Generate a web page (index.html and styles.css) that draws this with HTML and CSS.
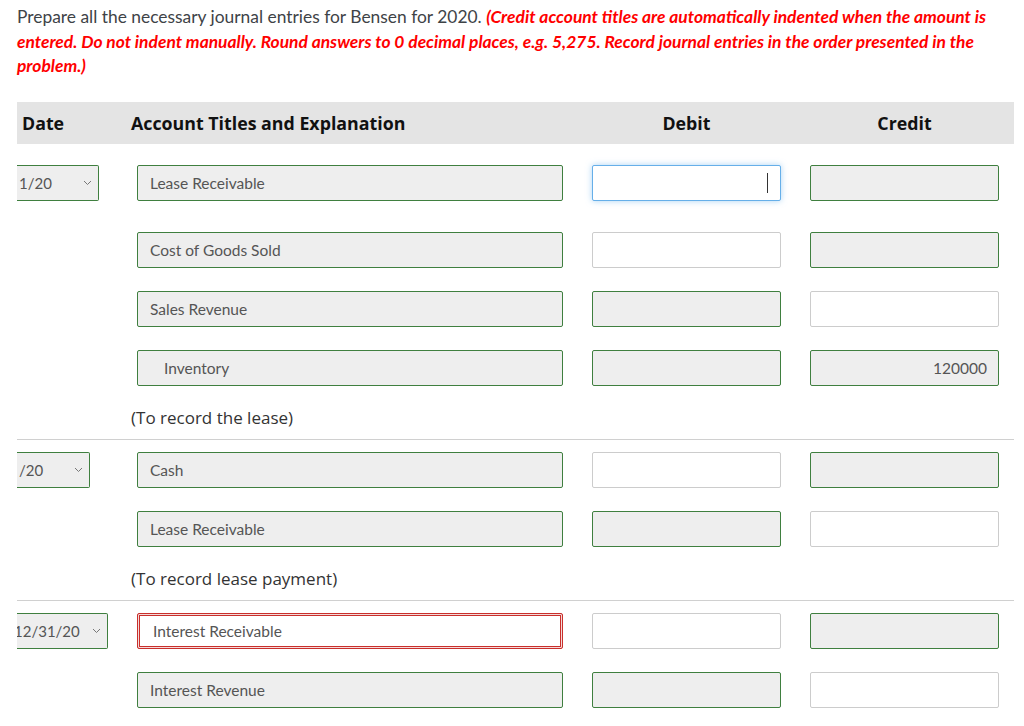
FILE: index.html
```html
<!DOCTYPE html>
<html>
<head>
<meta charset="utf-8">
<link rel="stylesheet" href="styles.css">
</head>
<body>
<div class="page">
  <p class="intro">Prepare all the necessary journal entries for Bensen for 2020. <em class="note">(Credit account titles are automatically indented when the amount is entered. Do not indent manually. Round answers to 0 decimal places, e.g. 5,275. Record journal entries in the order presented in the problem.)</em></p>

  <div class="journal">
    <div class="head">
      <div class="h-date">Date</div>
      <div class="h-acct">Account Titles and Explanation</div>
      <div class="h-num">Debit</div>
      <div class="h-num">Credit</div>
    </div>

    <div class="entry entry-first">
      <div class="row row-first">
        <div class="date-cell"><div class="date-box date-a"><span class="date-text">1/20</span><svg class="chev" width="9" height="6" viewBox="0 0 9 6"><polyline points="1,1 4.5,4.5 8,1" fill="none" stroke="#777" stroke-width="1"/></svg></div></div>
        <div class="field done">Lease Receivable</div>
        <div class="field focus"><span class="caret"></span></div>
        <div class="field done"></div>
      </div>
      <div class="row">
        <div class="date-cell"></div>
        <div class="field done">Cost of Goods Sold</div>
        <div class="field blank"></div>
        <div class="field done"></div>
      </div>
      <div class="row">
        <div class="date-cell"></div>
        <div class="field done">Sales Revenue</div>
        <div class="field done"></div>
        <div class="field blank"></div>
      </div>
      <div class="row">
        <div class="date-cell"></div>
        <div class="field done indent">Inventory</div>
        <div class="field done"></div>
        <div class="field done num">120000</div>
      </div>
      <div class="explain">(To record the lease)</div>
    </div>

    <div class="entry">
      <div class="row">
        <div class="date-cell"><div class="date-box date-b"><span class="date-text">/20</span><svg class="chev" width="9" height="6" viewBox="0 0 9 6"><polyline points="1,1 4.5,4.5 8,1" fill="none" stroke="#777" stroke-width="1"/></svg></div></div>
        <div class="field done">Cash</div>
        <div class="field blank"></div>
        <div class="field done"></div>
      </div>
      <div class="row">
        <div class="date-cell"></div>
        <div class="field done">Lease Receivable</div>
        <div class="field done"></div>
        <div class="field blank"></div>
      </div>
      <div class="explain">(To record lease payment)</div>
    </div>

    <div class="entry last">
      <div class="row">
        <div class="date-cell"><div class="date-box date-c"><span class="date-text cut">12/31/20</span><svg class="chev" width="9" height="6" viewBox="0 0 9 6"><polyline points="1,1 4.5,4.5 8,1" fill="none" stroke="#777" stroke-width="1"/></svg></div></div>
        <div class="field error">Interest Receivable</div>
        <div class="field blank"></div>
        <div class="field done"></div>
      </div>
      <div class="row">
        <div class="date-cell"></div>
        <div class="field done">Interest Revenue</div>
        <div class="field done"></div>
        <div class="field blank"></div>
      </div>
    </div>
  </div>
</div>
</body>
</html>
```

FILE: styles.css
```css
* { box-sizing: border-box; }
html, body { margin: 0; padding: 0; background: #fff; }
body { font-family: Lato, "Open Sans", sans-serif; overflow: hidden; }

.page { padding: 5px 10px 0 17px; }

.intro {
  margin: 0;
  width: 990px;
  font-size: 17.4px;
  line-height: 24.5px;
  color: #3e4347;
}
.note {
  color: #f00;
  font-weight: 700;
  font-style: italic;
}

.journal { margin-top: 23px; width: 997px; }

.head {
  display: grid;
  grid-template-columns: 91px 426px 189px 189px;
  column-gap: 29px;
  align-items: center;
  height: 42px;
  padding-right: 15px;
  background: #e4e4e4;
  font-family: "Open Sans", sans-serif;
  font-weight: 700;
  font-size: 17.8px;
  color: #111;
}
.h-date { padding-left: 5px; }
.h-acct { margin-left: -6px; }
.h-num { text-align: center; }

.entry {
  padding-top: 12px;
  padding-bottom: 9px;
  border-bottom: 1px solid #d0d0d0;
}
.entry-first { padding-top: 21px; }
.entry.last { border-bottom: none; padding-top: 12px; }

.row {
  display: grid;
  grid-template-columns: 91px 426px 189px 189px;
  column-gap: 29px;
  height: 36px;
  margin-bottom: 23px;
}
.row-first { margin-bottom: 31px; }

.date-cell { overflow: hidden; }
.date-box {
  height: 36px;
  display: flex;
  align-items: center;
  justify-content: space-between;
  background: #eeeeee;
  border: 1px solid #3f7f3f;
  border-left: none;
  border-radius: 0 2px 2px 0;
  font-size: 15px;
  color: #555;
  padding-right: 6px;
}
.date-a { width: 82px; }
.date-b { width: 73px; }
.date-c { width: 91px; }
.date-text { padding-left: 2px; }
.date-text.cut { margin-left: -3px; padding-left: 0; }
.chev { flex: none; }

.field {
  height: 36px;
  display: flex;
  align-items: center;
  padding: 0 12px;
  font-size: 15.5px;
  color: #555;
  border-radius: 2px;
}
.field.done {
  background: #eeeeee;
  border: 1px solid #3f7f3f;
}
.field.blank {
  background: #fff;
  border: 1px solid #cccccc;
}
.field.focus {
  background: #fff;
  border: 1px solid #66afe9;
  box-shadow: 0 0 6px rgba(102, 175, 233, 0.55);
  justify-content: flex-end;
}
.caret {
  display: block;
  width: 1px;
  height: 20px;
  background: #333;
}
.field.error {
  background: #fff;
  border: 1px solid #c9302c;
  box-shadow: inset 0 0 0 1px #f4dada, inset 0 0 0 2px #c9302c;
  padding-left: 15px;
}
.field.indent { padding-left: 26px; }
.field.num { justify-content: flex-end; padding-right: 11px; }

.explain {
  margin-top: -3px;
  margin-left: -6px;
  padding-left: 120px;
  height: 24px;
  line-height: 24px;
  font-family: "Open Sans", sans-serif;
  font-size: 17px;
  color: #333;
}
```
